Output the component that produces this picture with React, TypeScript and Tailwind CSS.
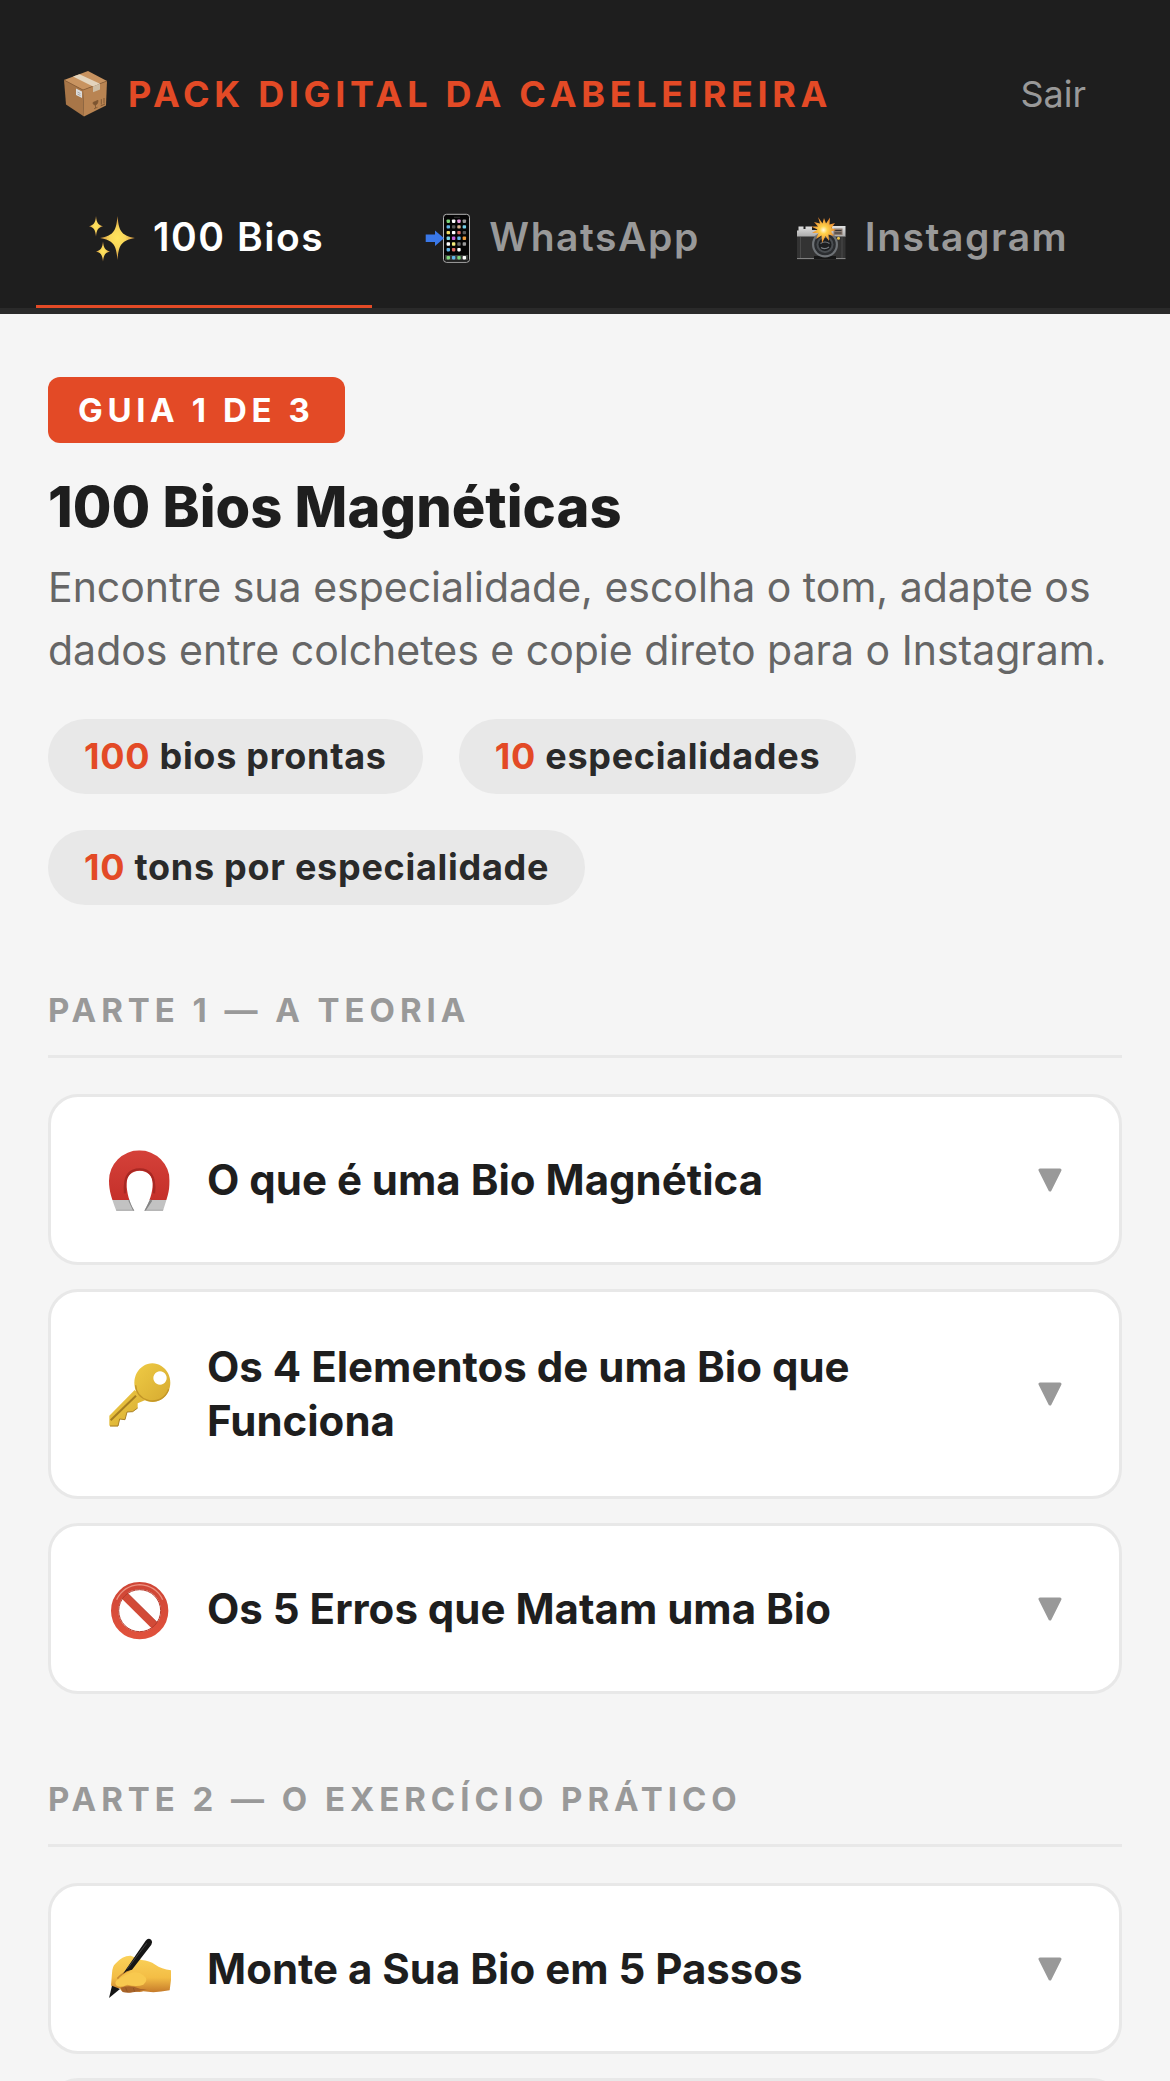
import { useState, type ReactNode } from "react";

function BoxIcon() {
  return (
    <svg viewBox="0 0 44 46" className="h-[46px] w-11 shrink-0" aria-hidden="true">
      <path d="M0 9 19 19 20 45.500 2 33.500Z" fill="#a87648" />
      <path d="M19 19 43 10 42 34.500 20 45.500Z" fill="#b98452" />
      <path d="M0 9 24 0 43 10 19 19Z" fill="#c89360" />
      <path d="M0 9 19 19 43 10" fill="none" stroke="#8a5c33" strokeWidth=".7" />
      <path d="M9 5.600 15.500 3.200 36 12.800 29 15.400Z" fill="#e3d4bd" />
      <path d="M29 15.400 36 12.800V18.500L29 21.200Z" fill="#cfbfa6" />
      <path d="M12 17.500 18 20.500V27L12 24Z" fill="#dcdcdc" />
      <path d="M13.500 21 16.500 22.600M13.500 23 16.500 24.600" stroke="#999" strokeWidth=".8" />
      <path d="M29 31.500 34 29.300C34 32 33 33.500 31.500 34 30 34.200 29 33 29 31.500ZM31.500 34V37M30 37.800 33.500 36.300" fill="#7c5430" stroke="#7c5430" strokeWidth=".8" />
      <path d="M37.300 28.200V33.500M40 27V32.400M36.600 35 41 33" stroke="#7c5430" strokeWidth=".9" />
    </svg>
  );
}

function SparklesIcon() {
  return (
    <svg viewBox="0 0 52 52" className="size-[52px] shrink-0" aria-hidden="true">
      <defs>
        <radialGradient id="spark">
          <stop offset="0" stopColor="#ffe45c" />
          <stop offset=".45" stopColor="#f8d65a" />
          <stop offset="1" stopColor="#c98a3c" />
        </radialGradient>
      </defs>
      <g fill="url(#spark)">
        <path d="M33.500 5C34.800 19 36.500 24.500 51 27 36.500 29.500 34.800 35 33.500 49 32.200 35 30.500 29.500 16 27 30.500 24.500 32.200 19 33.500 5Z" />
        <path d="M12 5C12.800 12 14 14 19 15.200 14 16.500 12.800 18.500 12 25.500 11.200 18.500 10 16.500 5 15.200 10 14 11.200 12 12 5Z" />
        <path d="M19 30.500C19.800 37 21 39.300 26 40.500 21 41.700 19.800 44 19 50.500 18.200 44 17 41.700 12 40.500 17 39.300 18.200 37 19 30.500Z" />
      </g>
    </svg>
  );
}

const appRows = [
  ["#7fd67a", "#ffffff", "#e79be0", "#9a9a9a"],
  ["#62b5e8", "#5c5c5c", "#d9b48e", "#74d0ea"],
  ["#f2dc62", "#ffffff", "#d9685f", "#5c5c5c"],
  ["#79d5e0", "#c65fd8", "#62b5e8", "#ee9a3a"],
  ["#ffffff", "#f2ea7a", "#6a6a6a", "#9a9a9a"],
  ["#62b5e8", "#d9685f", "#ffffff"],
];

function PhoneIcon() {
  return (
    <svg viewBox="0 0 52 52" className="size-[52px] shrink-0" aria-hidden="true">
      <rect x="23.500" y="3.300" width="26" height="48" rx="3" fill="#050505" stroke="#b4b4b4" strokeWidth="1" />
      <path d="M34 6.300h6" stroke="#2c2c2c" strokeWidth="1.200" />
      {appRows.map((row, y) =>
        row.map((color, x) => (
          <rect key={`${x}-${y}`} x={26.6 + x * 5.35} y={8.5 + y * 5.7} width="3.400" height="3.400" rx=".8" fill={color} />
        )),
      )}
      <rect x="25" y="44" width="23" height="5.500" fill="#3a3d3a" />
      {["#7fd67a", "#62b5e8", "#7fd67a", "#ffffff"].map((color, x) => (
        <rect key={x} x={26.6 + x * 5.35} y="45" width="3.400" height="3.400" rx=".8" fill={color} />
      ))}
      <path d="M5.700 23.500H15V19.500L24 27.200 15 35V31H5.700Z" fill="#3a78e8" />
    </svg>
  );
}

function CameraIcon() {
  return (
    <svg viewBox="0 0 52 52" className="size-[52px] shrink-0" aria-hidden="true">
      <defs>
        <linearGradient id="silver" x1="0" y1="0" x2="0" y2="1">
          <stop offset="0" stopColor="#e2e2e2" />
          <stop offset="1" stopColor="#a9a9a9" />
        </linearGradient>
        <radialGradient id="flash">
          <stop offset="0" stopColor="#fffbe0" />
          <stop offset=".3" stopColor="#ffd24a" />
          <stop offset="1" stopColor="#e8832c" />
        </radialGradient>
      </defs>
      <path d="M2.500 15.500H7.500V18H9.500V15.500H16V19H36V15H49.500V26H1V19.500H2.500Z" fill="url(#silver)" />
      <rect x="1" y="25.500" width="48.500" height="22" fill="#333" />
      <path d="M1 47.600H49.500" stroke="#8c8c8c" strokeWidth="1" />
      <path d="M4.500 26V47M46 26V47" stroke="#4a4a4a" strokeWidth="1" />
      <rect x="37.500" y="17.500" width="9" height="6.500" fill="#8b7b70" />
      <path d="M38.500 19.500H45.500M38.500 22H45.500" stroke="#333" strokeWidth="1" />
      <circle cx="42.500" cy="27.300" r="1.500" fill="#f0c648" />
      <path d="M18 45H40V48H18Z" fill="#161616" />
      <circle cx="29" cy="33.500" r="13" fill="#6e7276" />
      <circle cx="29" cy="33.500" r="10.800" fill="#2b2d30" />
      <circle cx="29" cy="33.500" r="8.500" fill="#4a4e52" />
      <circle cx="29" cy="33.500" r="6.500" fill="#1c1e20" />
      <path d="M24.500 32.500Q29 29.500 33.500 32.500M25 36.500Q29 39 33 36" fill="none" stroke="#777c80" strokeWidth="1.200" />
      <path d="M22 6 26.500 12.500 28 7 30 12.500 34 6.500 33.500 13.500 39 12 35.500 17 40 19 35 20.500 38 25 32.500 23.500 33 30 29.500 25 26 32 25.500 24.500 20 28 22.500 22 16 22 21.500 18.500 15 15.500 22 15.500 18 11 24 12.500Z" fill="url(#flash)" />
    </svg>
  );
}

function MagnetIcon() {
  return (
    <svg viewBox="45 45 207 207" className="size-[69px] shrink-0" aria-hidden="true">
      <defs>
        <clipPath id="horseshoe">
          <path d="M79 242C66 208 57 184 57 152A91 91 0 0 1 239 152C239 184 230 208 219 242H163C178 216 188 188 188 161 188 137 172 122 149 122 126 122 110 137 110 161 110 188 118 216 133 242Z" />
        </clipPath>
        <linearGradient id="red" x1="0" y1="0" x2="0" y2="1">
          <stop offset="0" stopColor="#d5423a" />
          <stop offset="1" stopColor="#c5302a" />
        </linearGradient>
      </defs>
      <g clipPath="url(#horseshoe)">
        <rect x="50" y="55" width="200" height="155" fill="url(#red)" />
        <path d="M105 190C100 130 125 118 149 118 174 118 198 132 192 190" fill="none" stroke="#a82823" strokeWidth="7" />
        <rect x="50" y="210" width="200" height="34" fill="#c2c2c2" />
        <path d="M118 210 133 242M184 210 163 242" stroke="#858585" strokeWidth="7" />
        <path d="M70 241H240" stroke="#8d8d8d" strokeWidth="3" />
      </g>
    </svg>
  );
}

function KeyIcon() {
  return (
    <svg viewBox="45 44 207 207" className="size-[69px] shrink-0" aria-hidden="true">
      <defs>
        <linearGradient id="gold" x1="0" y1="0" x2="1" y2="1">
          <stop offset="0" stopColor="#efcb45" />
          <stop offset="1" stopColor="#d6aa30" />
        </linearGradient>
      </defs>
      <path d="M134 134 58 211V239Q58 243 63 243H84L89 221 105 223 111 200 128 199 143 188V174L168 163Z" fill="url(#gold)" />
      <path d="M138 151 62 225" stroke="#a67d20" strokeWidth="6" />
      <path d="M60 242H84L89 221 105 223 111 200 128 199 143 188" fill="none" stroke="#a87f26" strokeWidth="3" />
      <path fillRule="evenodd" d="M187 54A54 58 0 1 1 186.900 54ZM210 78A20 20 0 1 0 210.100 78Z" fill="url(#gold)" />
      <path d="M236 132C226 160 200 172 174 165 150 158 138 140 137 120" fill="none" stroke="#c39628" strokeWidth="4" />
    </svg>
  );
}

function ForbiddenIcon() {
  return (
    <svg viewBox="45 38 207 207" className="size-[69px] shrink-0" aria-hidden="true">
      <defs>
        <linearGradient id="sign" x1="0" y1="0" x2="0" y2="1">
          <stop offset="0" stopColor="#cf4636" />
          <stop offset="1" stopColor="#e0513c" />
        </linearGradient>
      </defs>
      <path d="M101 101 197 196" stroke="#d24a37" strokeWidth="24" />
      <path d="M109 92 206 188" stroke="#b83628" strokeWidth="3" />
      <circle cx="149" cy="148" r="75" fill="none" stroke="url(#sign)" strokeWidth="22" />
      <circle cx="149" cy="148" r="63" fill="none" stroke="#b63a2b" strokeWidth="3" />
      <path d="M80 115Q100 73 149 70 198 73 218 115" fill="none" stroke="#ec9180" strokeWidth="4" />
    </svg>
  );
}

function WritingIcon() {
  return (
    <svg viewBox="45 42 207 207" className="size-[69px] shrink-0" aria-hidden="true">
      <defs>
        <linearGradient id="skin" x1="0" y1="0" x2="0" y2="1">
          <stop offset="0" stopColor="#fbd25a" />
          <stop offset=".6" stopColor="#f3bd45" />
          <stop offset="1" stopColor="#c57a2a" />
        </linearGradient>
      </defs>
      <path d="M243 151Q214 147 196 134 178 122 155 120L122 107Q98 106 76 131 67 138 66 160L63 196Q70 208 90 205 96 220 108 215 122 220 132 214 150 218 160 214 196 220 239 211 245 182 243 151Z" fill="url(#skin)" />
      <path d="M92 203Q112 196 132 200 160 212 178 206 150 212 134 216 112 220 98 216Z" fill="#a8642a" />
      <path d="M82 176Q96 160 118 151" fill="none" stroke="#c98a30" strokeWidth="5" />
      <path d="M167 62Q175 52 184 60 189 66 184 74L126 149 110 154 99 161Z" fill="#151515" />
      <path d="M170 70 112 146" stroke="#444" strokeWidth="3" />
      <path d="M66 197 57 234 90 207Z" fill="#151515" />
      <path d="M80 181Q98 168 120 160 144 152 160 166 178 180 160 194 140 202 112 194 92 204 80 197 72 190 80 181Z" fill="#f8c94f" />
      <path d="M107 203 112 216M130 204 134 215" stroke="#8d501e" strokeWidth="2" />
    </svg>
  );
}

function Arrow() {
  return (
    <svg viewBox="0 0 24 24" className="size-6 shrink-0" aria-hidden="true">
      <path d="M2 2H22L12 22Z" fill="#999" stroke="#999" strokeWidth="3" strokeLinejoin="round" />
    </svg>
  );
}

const tabs = [
  { label: "100 Bios", icon: <SparklesIcon /> },
  { label: "WhatsApp", icon: <PhoneIcon /> },
  { label: "Instagram", icon: <CameraIcon /> },
];

const stats = [
  { value: "100", label: "bios prontas" },
  { value: "10", label: "especialidades" },
  { value: "10", label: "tons por especialidade" },
];

function Section({ title, children }: { title: string; children: ReactNode }) {
  return (
    <section className="mt-[84px]">
      <h2 className="border-b-3 border-[#e8e8e8] pb-6 text-[33px] leading-[42px] font-bold tracking-[0.15em] text-[#999] uppercase">
        {title}
      </h2>
      <div className="mt-9 flex flex-col gap-6">{children}</div>
    </section>
  );
}

function Card({ icon, title }: { icon: ReactNode; title: string }) {
  return (
    <button
      type="button"
      aria-expanded="false"
      className="flex w-full items-center gap-[33px] rounded-[30px] border-3 border-[#e8e8e8] bg-white py-12 pr-[57px] pl-[54px] text-left"
    >
      {icon}
      <span className="flex-1 text-[42px] leading-[54px] font-bold text-[#1e1e1e]">{title}</span>
      <Arrow />
    </button>
  );
}

export default function App() {
  const [active, setActive] = useState(0);
  return (
    <div className="flex h-screen flex-col bg-[#f5f5f5] font-['Inter',sans-serif]">
      <header className="shrink-0 border-b-6 border-[#2a2a2a] bg-[#1e1e1e]">
        <div className="flex items-center justify-between pt-[71px] pr-[84px] pb-[51px] pl-16 text-[36px] leading-[45px]">
          <div className="flex items-center gap-5">
            <BoxIcon />
            <span className="font-bold tracking-[0.13em] text-[#e34a26] uppercase">Pack Digital da Cabeleireira</span>
          </div>
          <button type="button" className="text-[#999]">Sair</button>
        </div>
        <nav className="flex px-9">
          {tabs.map((tab, i) => (
            <button
              key={tab.label}
              type="button"
              aria-current={i === active ? "page" : undefined}
              onClick={() => setActive(i)}
              className={
                i === active
                  ? "flex h-[140px] items-center gap-[17px] border-b-3 border-[#e34a26] px-12 text-[39px] leading-[48px] font-semibold tracking-[0.04em] text-white"
                  : "flex h-[140px] items-center gap-[17px] border-b-3 border-transparent px-12 text-[39px] leading-[48px] font-semibold tracking-[0.04em] text-[#999]"
              }
            >
              {tab.icon}
              {tab.label}
            </button>
          ))}
        </nav>
      </header>

      <main className="flex-1 overflow-y-auto px-12 pt-[63px] [scrollbar-width:none]">
        <div className="w-fit rounded-xl bg-[#e34a26] px-[30px] py-[15px] text-[33px] leading-9 font-bold tracking-[0.14em] text-white uppercase">
          Guia 1 de 3
        </div>
        <h1 className="mt-7 text-[56px] leading-[72px] font-extrabold text-[#1e1e1e]">100 Bios Magnéticas</h1>
        <p className="mt-[13px] text-[41px] leading-[63px] text-[#666]">
          Encontre sua especialidade, escolha o tom, adapte os dados entre colchetes e copie direto para o Instagram.
        </p>
        <ul className="mt-[37px] flex flex-wrap gap-9">
          {stats.map((stat) => (
            <li
              key={stat.label}
              className="rounded-full bg-[#e8e8e8] px-9 py-[15px] text-[36px] leading-[45px] font-bold tracking-[0.02em] text-[#2a2a2a]"
            >
              <span className="text-[#e34a26]">{stat.value}</span> {stat.label}
            </li>
          ))}
        </ul>

        <Section title="Parte 1 — A Teoria">
          <Card icon={<MagnetIcon />} title="O que é uma Bio Magnética" />
          <Card icon={<KeyIcon />} title="Os 4 Elementos de uma Bio que Funciona" />
          <Card icon={<ForbiddenIcon />} title="Os 5 Erros que Matam uma Bio" />
        </Section>

        <Section title="Parte 2 — O Exercício Prático">
          <Card icon={<WritingIcon />} title="Monte a Sua Bio em 5 Passos" />
          <div className="h-[171px] rounded-[30px] border-3 border-[#e8e8e8] bg-white" />
        </Section>
      </main>
    </div>
  );
}
